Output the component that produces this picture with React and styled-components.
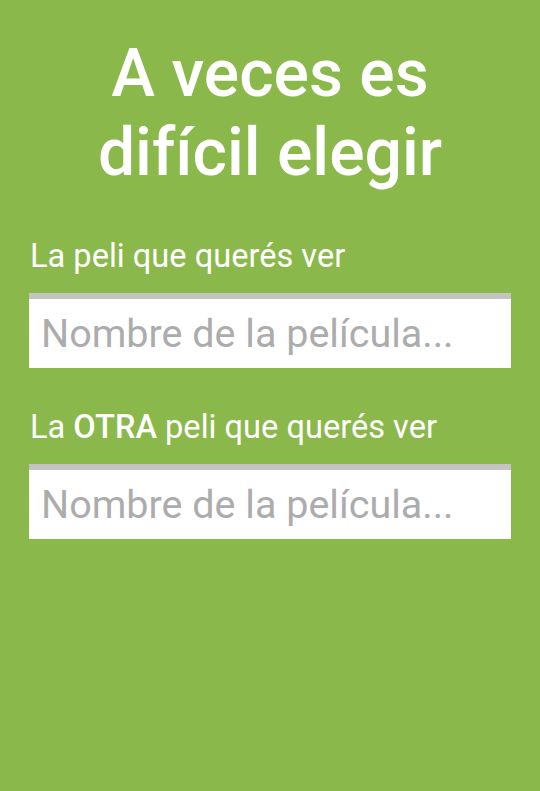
import React from "react";
import styled, { createGlobalStyle } from "styled-components";

const Global = createGlobalStyle`
  html, body { margin: 0; padding: 0; background: #8ab84a; }
  body { font-family: Roboto, "Noto Sans", Arial, sans-serif; }
  * { box-sizing: border-box; }
`;

const Page = styled.div`
  min-height: 791px;
  background: #8ab84a;
  padding: 34px 29px 0;
  display: flex;
  flex-direction: column;
`;

const Title = styled.h1`
  margin: 0 0 45px;
  text-align: center;
  color: #fff;
  font-family: Roboto, sans-serif;
  font-weight: 500;
  font-size: 66px;
  line-height: 79px;
`;

const Field = styled.div`
  display: flex;
  flex-direction: column;
  gap: 18px;
  margin-bottom: 40px;
`;

const Label = styled.label`
  color: #fff;
  font-family: Roboto, sans-serif;
  font-size: 32.6px;
  line-height: 38px;
  font-weight: 400;
  padding-left: 1px;
  b { font-weight: 500; }
`;

const Input = styled.input`
  display: block;
  width: 100%;
  height: 75px;
  border: none;
  border-top: 6px solid #c4c4c4;
  background: #fff;
  padding: 0 12px;
  font-family: Roboto, sans-serif;
  font-size: 39.5px;
  color: #333;
  outline: none;
  &::placeholder { color: #acacac; }
`;

export default function App() {
  return (
    <>
      <Global />
      <Page>
        <Title>A veces es<br />difícil elegir</Title>
        <Field>
          <Label>La peli que querés ver</Label>
          <Input placeholder="Nombre de la película..." />
        </Field>
        <Field>
          <Label>La <b>OTRA</b> peli que querés ver</Label>
          <Input placeholder="Nombre de la película..." />
        </Field>
      </Page>
    </>
  );
}
